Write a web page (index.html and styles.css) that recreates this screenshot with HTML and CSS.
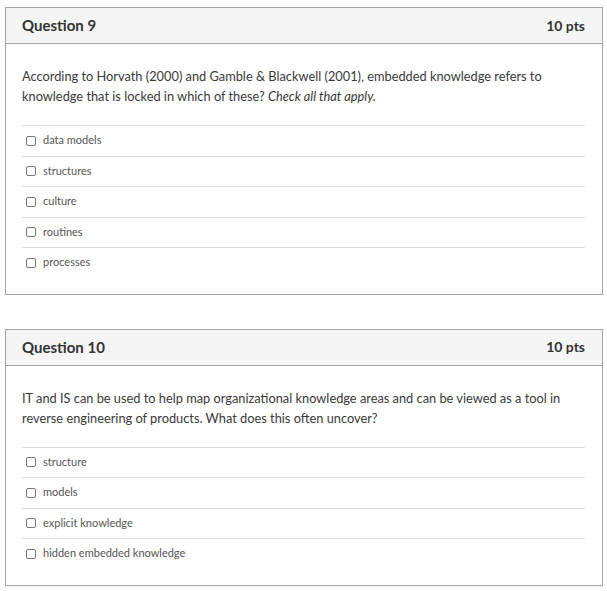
FILE: index.html
```html
<!DOCTYPE html>
<html>
<head>
<meta charset="utf-8">
<link rel="stylesheet" href="styles.css">
</head>
<body>
<div class="page">
  <section class="question">
    <header class="q-header">
      <h2 class="q-title">Question 9</h2>
      <span class="q-pts">10 pts</span>
    </header>
    <div class="q-body">
      <p class="q-text">According to Horvath (2000) and Gamble &amp; Blackwell (2001), embedded knowledge refers to knowledge that is locked in which of these? <em>Check all that apply.</em></p>
      <ul class="answers">
        <li class="answer"><span class="box"></span><span>data models</span></li>
        <li class="answer"><span class="box"></span><span>structures</span></li>
        <li class="answer"><span class="box"></span><span>culture</span></li>
        <li class="answer"><span class="box"></span><span>routines</span></li>
        <li class="answer"><span class="box"></span><span>processes</span></li>
      </ul>
    </div>
  </section>
  <section class="question">
    <header class="q-header">
      <h2 class="q-title">Question 10</h2>
      <span class="q-pts">10 pts</span>
    </header>
    <div class="q-body">
      <p class="q-text">IT and IS can be used to help map organizational knowledge areas and can be viewed as a tool in reverse engineering of products. What does this often uncover?</p>
      <ul class="answers">
        <li class="answer"><span class="box"></span><span>structure</span></li>
        <li class="answer"><span class="box"></span><span>models</span></li>
        <li class="answer"><span class="box"></span><span>explicit knowledge</span></li>
        <li class="answer"><span class="box"></span><span>hidden embedded knowledge</span></li>
      </ul>
    </div>
  </section>
</div>
</body>
</html>
```

FILE: styles.css
```css
html, body {
  margin: 0;
  padding: 0;
  background: #ffffff;
}
body {
  font-family: Lato, "Open Sans", "Liberation Sans", sans-serif;
  color: #3a3a3a;
}
.page {
  padding: 7px 4px 0 5px;
}
.question {
  border: 1px solid #a5a5a5;
  margin-bottom: 34px;
}
.q-header {
  height: 36px;
  box-sizing: border-box;
  background: #f5f5f5;
  border-bottom: 1px solid #a5a5a5;
  display: flex;
  align-items: center;
  justify-content: space-between;
  padding: 0 17px 1px 16px;
}
.q-title {
  margin: 0;
  font-size: 15px;
  font-weight: 700;
  color: #333333;
}
.q-pts {
  font-size: 14px;
  font-weight: 700;
  color: #333333;
}
.q-body {
  padding: 22px 17px 16px 16px;
}
.q-text {
  margin: 0 0 19px;
  font-size: 12.8px;
  line-height: 20px;
}
.answers {
  list-style: none;
  margin: 0;
  padding: 0;
}
.answer {
  border-top: 1px solid #dcdcdc;
  height: 27.5px;
  display: flex;
  align-items: center;
  gap: 7px;
  padding: 0 0 2px 4px;
  font-size: 11px;
  color: #555555;
}
.box {
  width: 8px;
  height: 8px;
  border: 1px solid #777777;
  border-radius: 2px;
  background: #fff;
  flex: none;
  margin-top: 2px;
}
```
